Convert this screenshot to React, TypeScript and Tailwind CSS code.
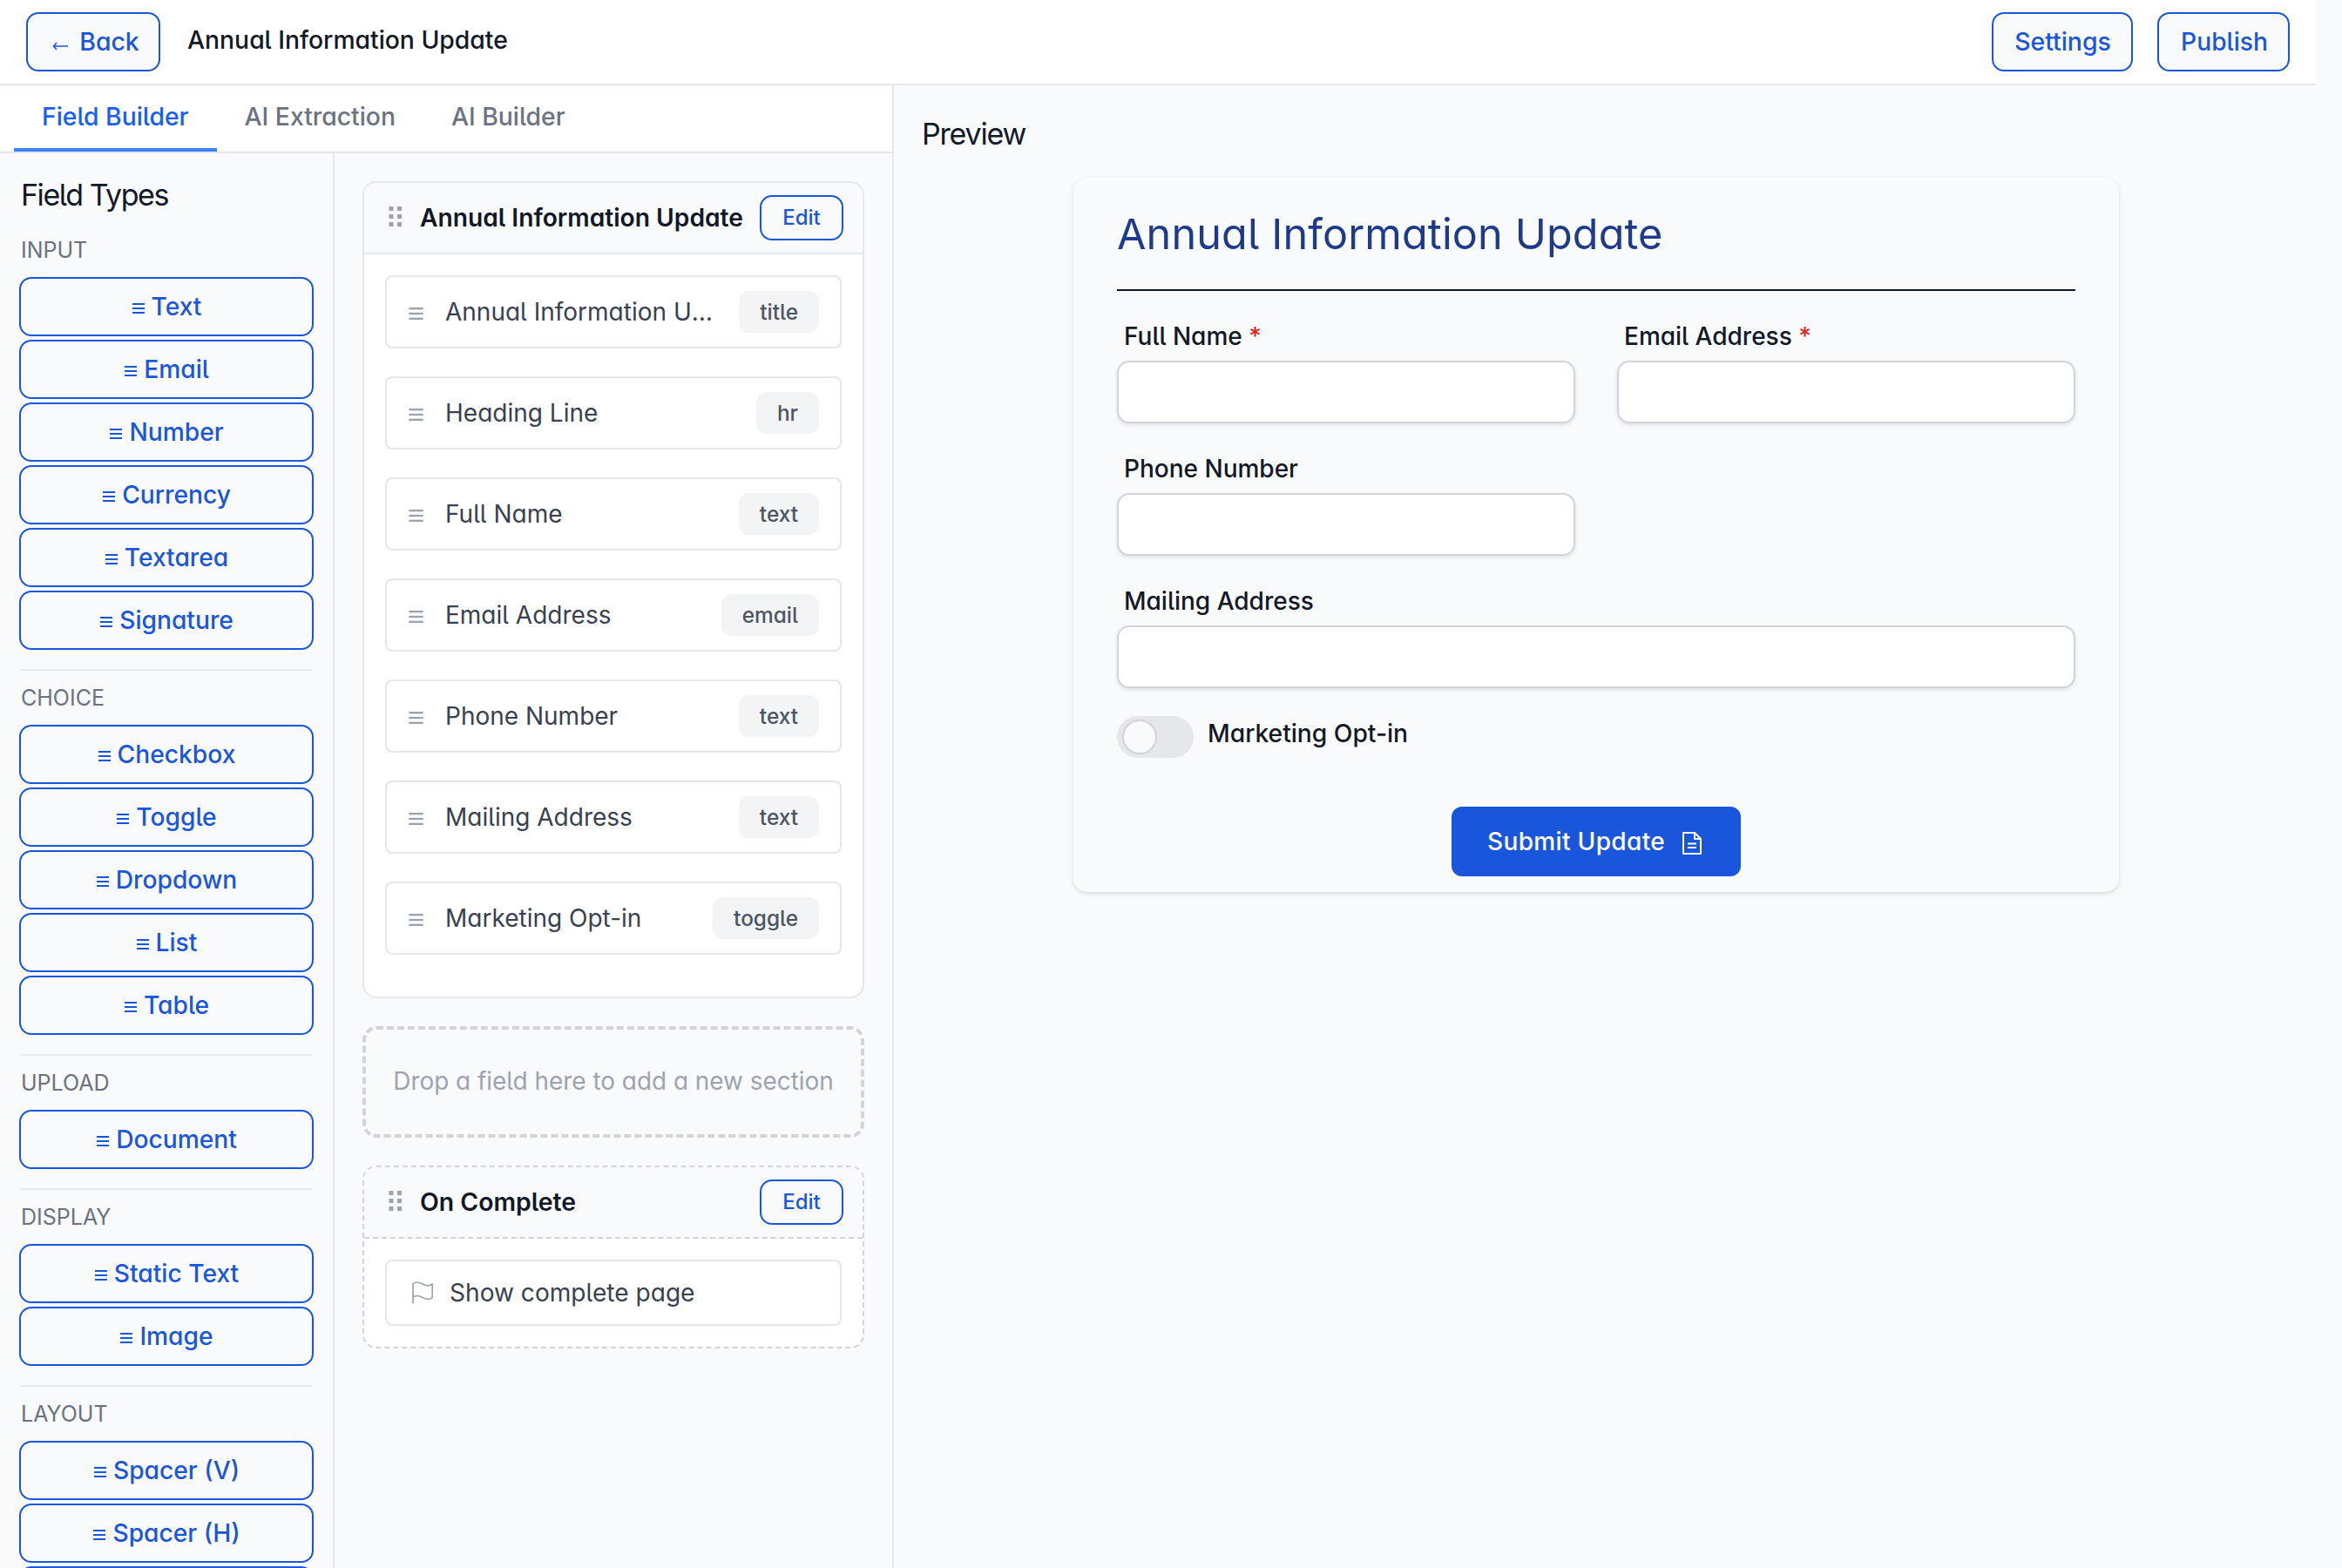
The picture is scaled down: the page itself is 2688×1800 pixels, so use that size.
import React from 'react';
import clsx from 'clsx';

const fieldGroups = [
    { label: 'Input', fields: ['Text', 'Email', 'Number', 'Currency', 'Textarea', 'Signature'] },
    { label: 'Choice', fields: ['Checkbox', 'Toggle', 'Dropdown', 'List', 'Table'] },
    { label: 'Upload', fields: ['Document'] },
    { label: 'Display', fields: ['Static Text', 'Image'] },
    { label: 'Layout', fields: ['Spacer (V)', 'Spacer (H)', ''] },
];

const sectionFields = [
    { name: 'Annual Information Update', type: 'title' },
    { name: 'Heading Line', type: 'hr' },
    { name: 'Full Name', type: 'text' },
    { name: 'Email Address', type: 'email' },
    { name: 'Phone Number', type: 'text' },
    { name: 'Mailing Address', type: 'text' },
    { name: 'Marketing Opt-in', type: 'toggle' },
];

const tabs = ['Field Builder', 'AI Extraction', 'AI Builder'];

const Bars: React.FC<{ className?: string }> = ({ className }) => (
    <svg viewBox="0 0 14 12" className={className} fill="currentColor" aria-hidden="true">
        <rect y="0" width="14" height="2" />
        <rect y="5" width="14" height="2" />
        <rect y="10" width="14" height="2" />
    </svg>
);

const Grip = () => (
    <svg viewBox="0 0 16 24" className="-mt-[3px] h-6 w-4 shrink-0 text-[#9ca3af]" fill="currentColor" aria-hidden="true">
        {[0, 9, 18].map((y) => (
            <g key={y}>
                <rect x="0.5" y={y} width="5" height="5" />
                <rect x="10" y={y} width="5" height="5" />
            </g>
        ))}
    </svg>
);

const OutlineBtn: React.FC<{ className?: string; children: React.ReactNode }> = ({ className, children }) => (
    <button
        className={clsx(
            'flex items-center justify-center shrink-0 rounded-[14px] border-2 border-[#1a56db] bg-[#f9fafb] font-medium text-[#1a56db]',
            className
        )}
    >
        {children}
    </button>
);

const TextField: React.FC<{ label: string; required?: boolean; className?: string }> = ({
    label,
    required,
    className,
}) => (
    <label className={clsx('flex flex-col', className)}>
        <span className="h-[56px] pl-2 pt-2 leading-[40px] font-medium">
            {label}
            {required && <span className="text-[#e02424]"> *</span>}
        </span>
        <input className="h-[72px] w-full rounded-[14px] border-2 border-[#d1d5db] bg-white shadow-[0_2px_4px_rgba(0,0,0,0.1)]" />
    </label>
);

const App: React.FC = () => {
    return (
        <div className="flex h-[1800px] w-[2688px] flex-col overflow-hidden bg-[#f9fafb] font-['Inter',sans-serif] text-[28px] text-[#111827] [font-feature-settings:'cv05','cv11']">
            {/* Top bar */}
            <header className="flex h-[98px] w-[2658px] shrink-0 items-center border-b-2 border-[#e5e7eb] bg-white px-[30px]">
                <OutlineBtn className="h-[68px] w-[154px] gap-[13px] pl-[6px] text-[28.4px]">
                    <svg viewBox="0 0 18 10" className="mt-[9px] h-[10px] w-[18px]" fill="none" stroke="currentColor" strokeWidth="1.6">
                        <path d="M18 5H1.5M5 1 1.5 5 5 9" />
                    </svg>
                    Back
                </OutlineBtn>
                <h1 className="ml-[31px] -mt-1 text-[28.3px] font-medium">Annual Information Update</h1>
                <div className="ml-auto flex gap-7">
                    <OutlineBtn className="h-[68px] w-[162px] pl-[1px] text-[28.4px]">Settings</OutlineBtn>
                    <OutlineBtn className="h-[68px] w-[152px] pl-[2px] text-[28.2px]">Publish</OutlineBtn>
                </div>
            </header>

            <div className="flex min-h-0 flex-1">
                <div className="flex w-[1026px] shrink-0 flex-col border-r-2 border-[#e5e7eb]">
                    {/* Tabs */}
                    <nav className="flex h-[78px] shrink-0 border-b-2 border-[#e5e7eb] bg-white pl-4">
                        {tabs.map((tab, index) => (
                            <button
                                key={tab}
                                className={clsx('border-b-4 px-8 pt-[1px] text-[28.3px] font-medium', {
                                    'border-[#3b82f6] text-[#155dfc]': index === 0,
                                    'border-transparent text-[#6b7280]': index !== 0,
                                })}
                            >
                                {tab}
                            </button>
                        ))}
                    </nav>

                    <div className="flex min-h-0 flex-1">
                        {/* Field palette */}
                        <aside className="w-[384px] shrink-0 overflow-hidden border-r-2 border-[#e5e7eb] px-[22px] pt-6">
                            <h2 className="pl-[2px] text-[34px] leading-[48px] tracking-[-1.45px]">Field Types</h2>
                            {fieldGroups.map((group, index) => (
                                <section key={group.label} className={index === 0 ? 'mt-2' : 'mt-[22px]'}>
                                    {index > 0 && <hr className="mx-[2px] border-t-2 border-[#e5e7eb]" />}
                                    <h3 className="h-[62px] pl-[2px] pt-[13px] text-[25px] leading-[36px] text-[#6b7280] uppercase">
                                        {group.label}
                                    </h3>
                                    <div className="flex flex-col gap-1">
                                        {group.fields.map((field) => (
                                            <OutlineBtn key={field} className="h-[68px] w-full gap-2 pl-[1px] text-[28.2px]">
                                                <Bars className="mt-[3px] h-3 w-[14px]" />
                                                {field}
                                            </OutlineBtn>
                                        ))}
                                    </div>
                                </section>
                            ))}
                        </aside>

                        {/* Sections */}
                        <main className="flex min-w-0 flex-1 flex-col gap-8 p-8">
                            <section className="overflow-hidden rounded-2xl border-2 border-[#e5e7eb] bg-white">
                                <div className="flex h-[82px] items-center border-b-2 border-[#e5e7eb] bg-[#f9fafb] pl-7 pr-[22px]">
                                    <Grip />
                                    <h2 className="ml-5 text-[28.2px] font-semibold whitespace-nowrap">Annual Information Update</h2>
                                    <OutlineBtn className="ml-auto h-[52px] w-24 text-[24px]">Edit</OutlineBtn>
                                </div>
                                <ul className="flex flex-col gap-8 p-6 pb-12">
                                    {sectionFields.map((field) => (
                                        <li
                                            key={field.name}
                                            className="flex h-[84px] items-center rounded-lg border-2 border-[#e5e7eb] pl-[25px] pr-6 text-[#374151]"
                                        >
                                            <Bars className="mt-[3px] h-[14px] w-[17px] shrink-0 text-[#9ca3af]" />
                                            <span className="ml-[25px] min-w-0 flex-1 truncate">{field.name}</span>
                                            <span className="ml-7 flex h-12 items-center rounded-xl bg-[#f3f4f6] px-6 text-[24.4px] font-medium text-[#4b5563]">
                                                {field.type}
                                            </span>
                                        </li>
                                    ))}
                                </ul>
                            </section>

                            <div className="flex h-32 shrink-0 items-center justify-center rounded-2xl border-4 border-dashed border-[#d1d5db] text-[27.9px] whitespace-nowrap text-[#9ca3af]">
                                Drop a field here to add a new section
                            </div>

                            <section className="overflow-hidden rounded-2xl border-2 border-dashed border-[#d1d5db] bg-white">
                                <div className="flex h-[82px] items-center border-b-2 border-dashed border-[#d1d5db] bg-[#f9fafb] pl-7 pr-[22px]">
                                    <Grip />
                                    <h2 className="ml-5 text-[28.4px] font-semibold">On Complete</h2>
                                    <OutlineBtn className="ml-auto h-[52px] w-24 text-[24px]">Edit</OutlineBtn>
                                </div>
                                <div className="p-6">
                                    <div className="flex h-[76px] items-center rounded-lg border-2 border-[#e5e7eb] pl-[29px] text-[#374151]">
                                        <svg
                                            viewBox="0 0 24 26"
                                            className="h-[26px] w-6 text-[#9ca3af]"
                                            fill="none"
                                            stroke="currentColor"
                                            strokeWidth="1.7"
                                            strokeLinecap="round"
                                            strokeLinejoin="round"
                                        >
                                            <path d="M1 24.6V2.6C2.5 1.4 4 1 6 1c4.500 0 7.500 3.800 12 3.800 2.200 0 3.800-.7 5.200-1.800v15.600c-1.400 1.200-3 1.900-5.200 1.900-4.500 0-7.500-4-12-4-2 0-3.500.5-5 1.700" />
                                        </svg>
                                        <span className="ml-[19px] text-[28.1px]">Show complete page</span>
                                    </div>
                                </div>
                            </section>
                        </main>
                    </div>
                </div>

                {/* Live preview */}
                <div className="w-[1632px] pt-8 pl-8 pr-[52px]">
                    <h2 className="text-[34px] leading-[48px] tracking-[-1.2px]">Preview</h2>
                    <div className="mx-auto mt-[26px] h-[820px] w-[1200px] rounded-2xl bg-[#f9fafb] px-[50px] pt-[35px] shadow-[0_2px_6px_rgba(0,0,0,0.1),0_2px_4px_-2px_rgba(0,0,0,0.1)]">
                        <h1 className="h-[93px] text-[48.5px] leading-[60px] tracking-[0.16px] text-[#1e3a8a]">
                            Annual Information Update
                        </h1>
                        <hr className="border-t-2 border-[#111827]" />
                        <div className="mt-6 grid grid-cols-2 gap-x-12 gap-y-6">
                            <TextField label="Full Name" required />
                            <TextField label="Email Address" required />
                            <TextField label="Phone Number" />
                            <TextField label="Mailing Address" className="col-span-2" />
                        </div>
                        <div className="mt-8 flex h-12">
                            <span className="flex h-12 w-[88px] items-center rounded-full bg-[#e5e7eb] pl-[6px]">
                                <span className="h-10 w-10 rounded-full border-2 border-[#d1d5db] bg-[#f9fafb]" />
                            </span>
                            <span className="ml-4 text-[28.2px] leading-[40px] font-medium">Marketing Opt-in</span>
                        </div>
                        <button className="mx-auto mt-14 flex h-20 w-[332px] items-center rounded-xl bg-[#1a56db] pl-[41px] font-medium tracking-[0.35px] text-white">
                            Submit Update
                            <svg
                                viewBox="0 0 22 26"
                                className="mt-1 ml-5 h-[26px] w-[22px]"
                                fill="none"
                                stroke="currentColor"
                                strokeWidth="2"
                                strokeLinejoin="round"
                            >
                                <path d="M1 1h13l7 7v17H1z M14 1v7h7 M6 13.500h10 M6 18h10" />
                            </svg>
                        </button>
                    </div>
                </div>
            </div>
        </div>
    );
};

export default App;
